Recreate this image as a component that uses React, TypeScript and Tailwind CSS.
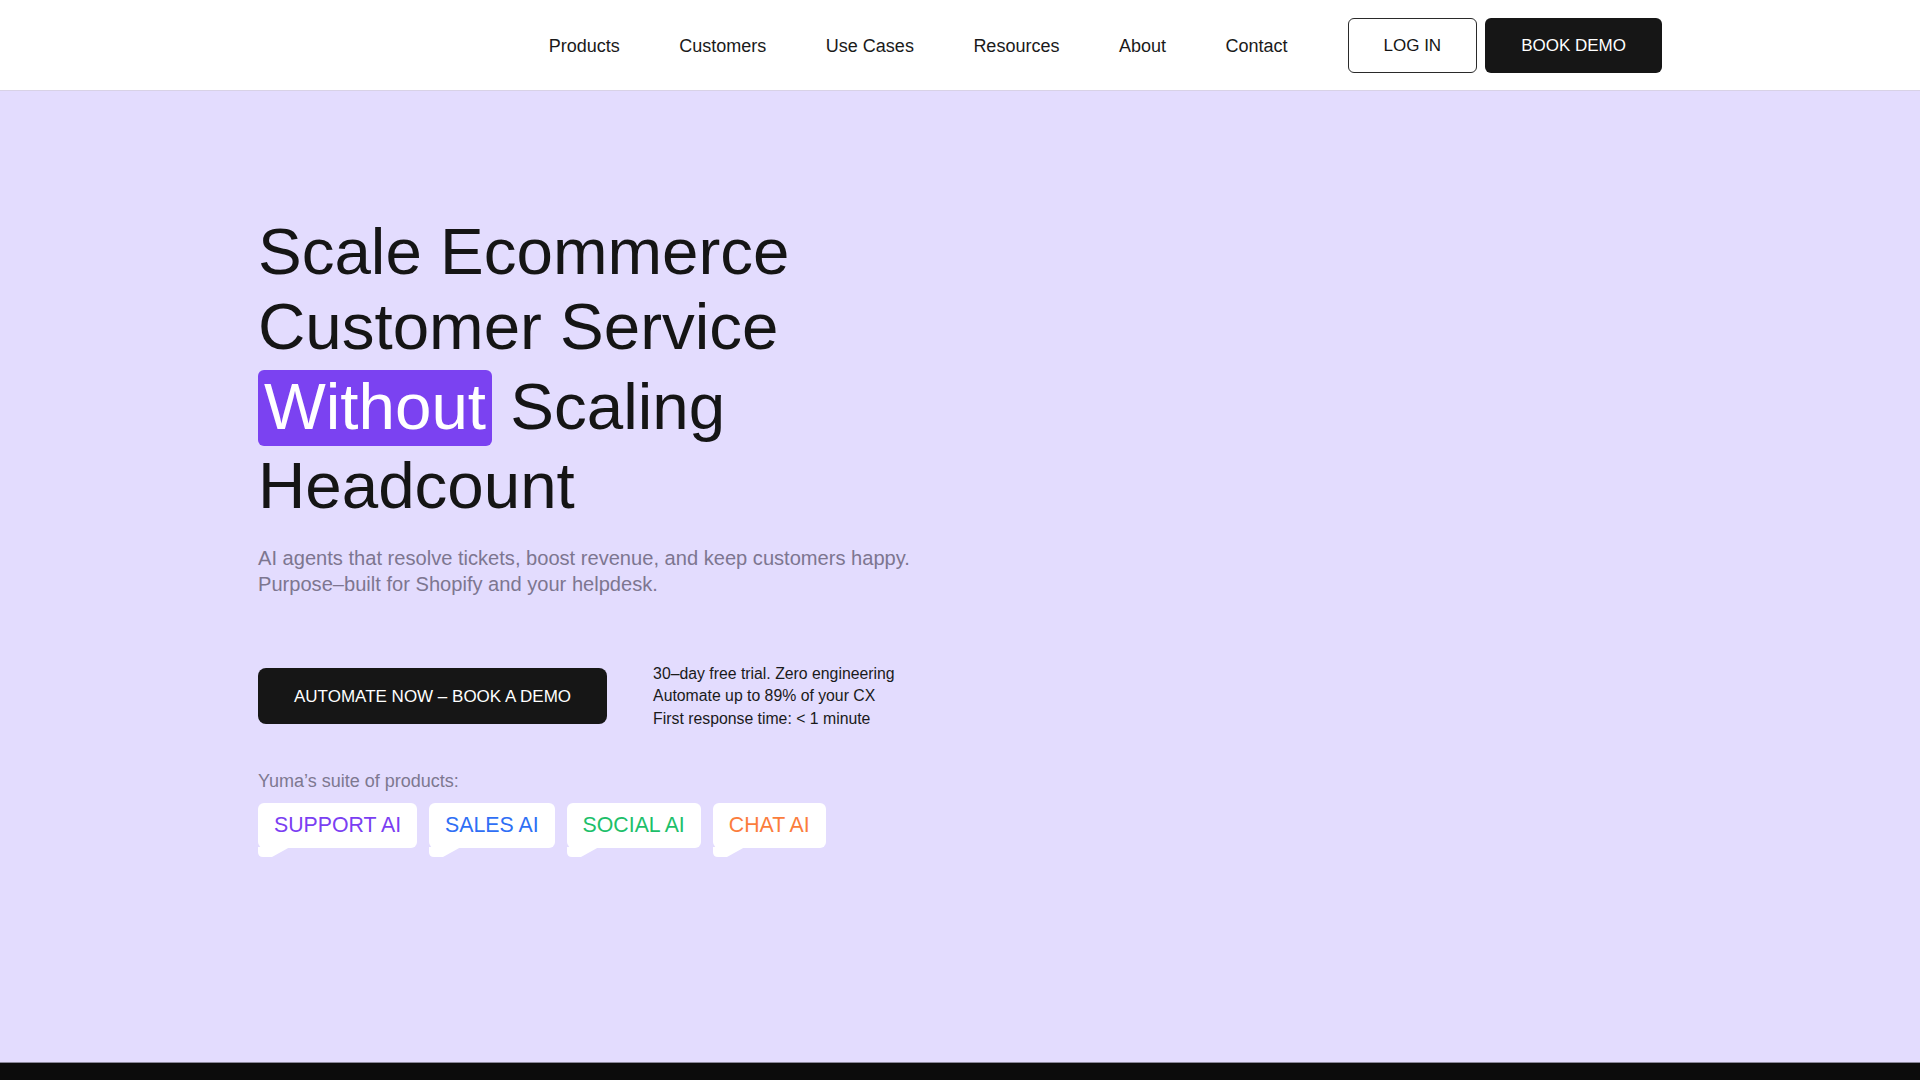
import React from "react";

const navLinks = ["Products", "Customers", "Use Cases", "Resources", "About", "Contact"];

const products = [
  { label: "SUPPORT AI", color: "text-[#7b3ff2]" },
  { label: "SALES AI", color: "text-[#2f6ff5]" },
  { label: "SOCIAL AI", color: "text-[#1dbf6a]" },
  { label: "CHAT AI", color: "text-[#fb7d3c]" },
];

const stats = [
  "30–day free trial. Zero engineering",
  "Automate up to 89% of your CX",
  "First response time: < 1 minute",
];

// Speech-bubble chip used for the product list
const ProductChip: React.FC<{ label: string; color: string }> = ({ label, color }) => (
  <div className="relative">
    <div
      className={`flex h-[45px] items-center rounded-[6px] bg-white px-[16px] text-[21.3px] leading-none ${color}`}
    >
      {label}
    </div>
    <svg
      className="absolute left-0 top-[44px] h-[10px] w-[32px]"
      viewBox="0 0 32 10"
      fill="#ffffff"
    >
      <path d="M0 0 H32 L14 10 H5 Q0 10 0 5 Z" />
    </svg>
  </div>
);

export default function App() {
  return (
    <div className="min-h-screen bg-[#0c0c0c] font-['Liberation_Sans',Arial,sans-serif] text-[#151515]">
      {/* Header */}
      <header className="h-[91px] border-b border-[#d8d2e6] bg-white">
        <div className="mx-auto flex h-full w-[1404px] items-center justify-end">
          <nav className="flex items-center gap-[59.5px] pt-[2px] text-[18px] text-[#1a1a1a]">
            {navLinks.map((link) => (
              <a key={link} href="#" className="leading-none">
                {link}
              </a>
            ))}
          </nav>
          <div className="ml-[60px] flex items-center gap-[8px]">
            <button className="h-[55px] rounded-[6px] border border-[#2a2a2a] bg-white px-[35px] pt-[2px] text-[17px] text-[#151515]">
              LOG IN
            </button>
            <button className="h-[55px] rounded-[6px] bg-[#161616] px-[36px] pt-[2px] text-[17px] text-white">
              BOOK DEMO
            </button>
          </div>
        </div>
      </header>

      {/* Hero */}
      <section className="h-[971px] bg-[#e3dcfe]">
        <div className="mx-auto w-[1404px] pt-[123px]">
          <h1 className="text-[65.5px] font-normal leading-[75px] text-[#151515]">
            Scale Ecommerce
            <br />
            Customer Service
            <br />
            <span className="mb-[2px] mt-[6px] inline-block rounded-[6px] bg-[#7b42f1] px-[6px] pb-[6px] pt-[4px] leading-none text-white">
              Without
            </span>{" "}
            Scaling
            <br />
            Headcount
          </h1>

          <p className="mt-[22px] text-[20.1px] leading-[26px] text-[#7d7690]">
            AI agents that resolve tickets, boost revenue, and keep customers happy.
            <br />
            Purpose–built for Shopify and your helpdesk.
          </p>

          <div className="mt-[66px] flex items-center gap-[46px]">
            <button className="h-[56px] rounded-[8px] bg-[#161616] px-[36px] text-[17px] text-white">
              AUTOMATE NOW – BOOK A DEMO
            </button>
            <ul className="text-[15.8px] leading-[22.5px] text-[#1a1a1a]">
              {stats.map((s) => (
                <li key={s}>{s}</li>
              ))}
            </ul>
          </div>

          <div className="mt-[39px] text-[18px] leading-[24px] text-[#7d7890]">
            Yuma’s suite of products:
          </div>
          <div className="mt-[10px] flex gap-[12px]">
            {products.map((p) => (
              <ProductChip key={p.label} label={p.label} color={p.color} />
            ))}
          </div>
        </div>
      </section>
      <div className="h-px bg-[#8a8799]" />
    </div>
  );
}
